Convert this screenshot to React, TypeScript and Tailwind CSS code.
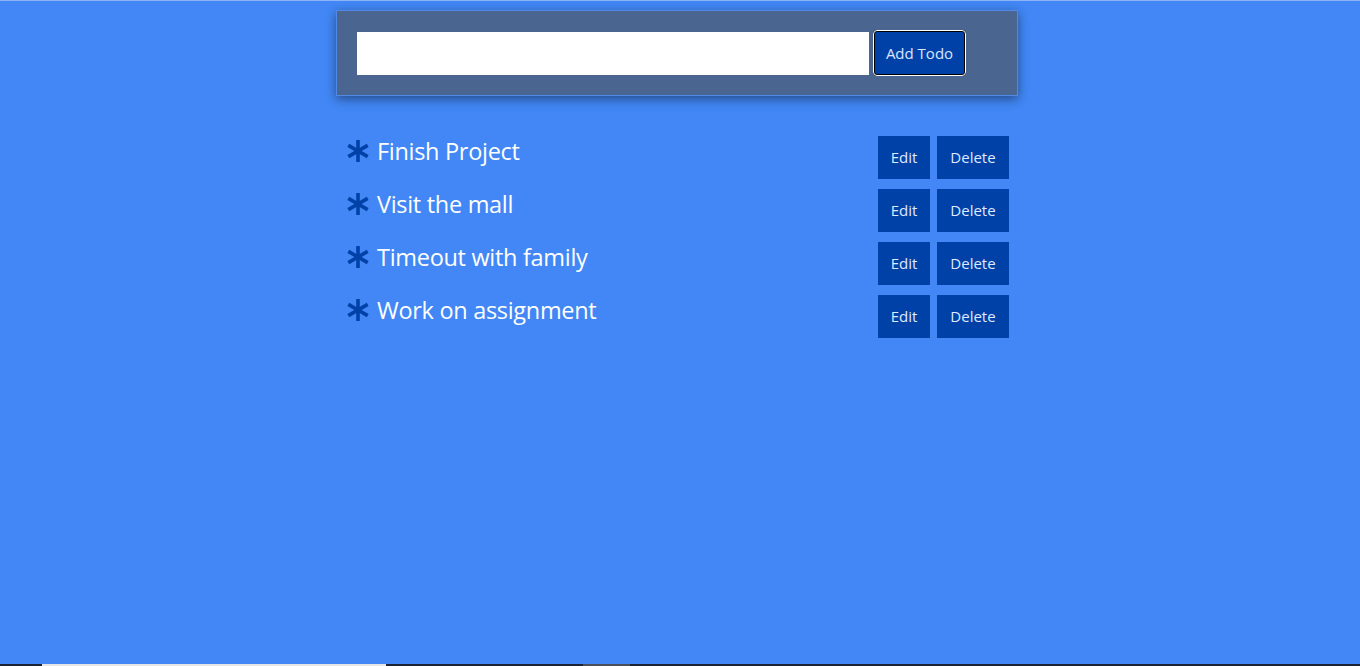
import React from "react";

const todos = ["Finish Project", "Visit the mall", "Timeout with family", "Work on assignment"];

function Asterisk() {
  return (
    <svg width="24" height="24" viewBox="0 0 24 24" className="shrink-0">
      <g stroke="#0041a8" strokeWidth="3.6" strokeLinecap="butt">
        <line x1="12" y1="1" x2="12" y2="23" />
        <line x1="2.3" y1="6.4" x2="21.7" y2="17.6" />
        <line x1="2.3" y1="17.6" x2="21.7" y2="6.4" />
      </g>
    </svg>
  );
}

export default function App() {
  return (
    <div
      className="h-[666px] w-full flex flex-col overflow-hidden bg-[#4287f5]"
      style={{ fontFamily: '"Open Sans", "Noto Sans", sans-serif' }}
    >
      <div className="h-px bg-[#8db4f6]" />
      <div className="flex-1">
        <div className="ml-[336px] w-[682px] mt-[9px]">
          <div className="border border-[#4f8ae6] bg-[#4a6690] shadow-[0_3px_10px_rgba(0,0,0,0.45)] pl-[20px] py-[19px] flex items-center">
            <input className="w-[512px] h-[43px] bg-white outline-none px-2" />
            <button className="ml-[4px] w-[93px] h-[46px] rounded-[4px] border-2 border-black outline outline-1 outline-white -outline-offset-1 bg-[#0041a8] text-[#d8e6ff] text-[15px]">
              Add Todo
            </button>
          </div>
          <ul className="mt-[40px] pl-[10px] pr-[9px] flex flex-col gap-[10px]">
            {todos.map((t) => (
              <li key={t} className="flex items-start justify-between">
                <div className="flex items-center gap-[7px] h-[30px]">
                  <Asterisk />
                  <span className="text-white text-[23.5px] leading-[30px] tracking-[-0.3px]">{t}</span>
                </div>
                <div className="flex gap-[7px]">
                  <button className="w-[52px] h-[43px] bg-[#0041a8] text-[#dfe9ff] text-[15px]">Edit</button>
                  <button className="w-[72px] h-[43px] bg-[#0041a8] text-[#dfe9ff] text-[15px]">Delete</button>
                </div>
              </li>
            ))}
          </ul>
        </div>
      </div>
      <div className="h-[2px] bg-[#1c2333] flex">
        <div className="ml-[42px] w-[344px] bg-[#e6e6e6]" />
        <div className="ml-[197px] w-[47px] bg-[#4a4f5a]" />
      </div>
    </div>
  );
}
